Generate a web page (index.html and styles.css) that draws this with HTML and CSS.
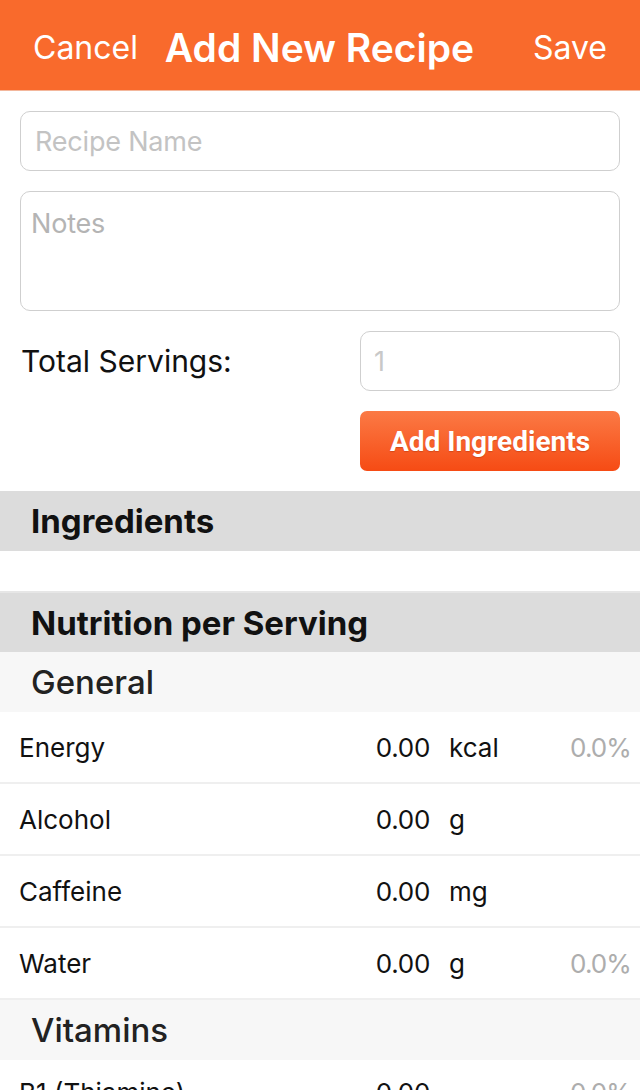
FILE: index.html
```html
<!DOCTYPE html>
<html>
<head>
<meta charset="utf-8">
<link rel="stylesheet" href="styles.css">
</head>
<body>
<header class="nav">
  <span class="nav-btn">Cancel</span>
  <span class="nav-title">Add New Recipe</span>
  <span class="nav-btn">Save</span>
</header>
<section class="form">
  <div class="field field-name"><span class="ph">Recipe Name</span></div>
  <div class="field field-notes"><span class="ph ph-notes">Notes</span></div>
  <div class="servings">
    <span class="servings-label">Total Servings:</span>
    <div class="field field-serv"><span class="ph ph-serv">1</span></div>
  </div>
  <div class="btn-row">
    <div class="btn">Add Ingredients</div>
  </div>
</section>
<div class="sec-head">Ingredients</div>
<div class="spacer"></div>
<div class="sec-head sec-head-top">Nutrition per Serving</div>
<div class="group-head">General</div>
<div class="row"><span class="r-name">Energy</span><span class="r-val">0.00</span><span class="r-unit">kcal</span><span class="r-pct">0.0%</span></div>
<div class="row"><span class="r-name">Alcohol</span><span class="r-val">0.00</span><span class="r-unit">g</span><span class="r-pct"></span></div>
<div class="row"><span class="r-name">Caffeine</span><span class="r-val">0.00</span><span class="r-unit">mg</span><span class="r-pct"></span></div>
<div class="row"><span class="r-name">Water</span><span class="r-val">0.00</span><span class="r-unit">g</span><span class="r-pct">0.0%</span></div>
<div class="group-head">Vitamins</div>
<div class="row row-last"><span class="r-name">B1 (Thiamine)</span><span class="r-val">0.00</span><span class="r-unit"></span><span class="r-pct">0.0%</span></div>
</body>
</html>
```

FILE: styles.css
```css
* { box-sizing: border-box; }
html, body { margin: 0; padding: 0; background: #fff; }
body {
  width: 640px;
  height: 1090px;
  overflow: hidden;
  font-family: Inter, "Liberation Sans", sans-serif;
  color: #111;
}
.nav {
  height: 91px;
  background: #f96a2c;
  border-bottom: 1px solid #f3b79c;
  display: flex;
  align-items: center;
  justify-content: space-between;
  padding: 4px 33px 0 33px;
  color: #fff;
}
.nav-btn { font-size: 32px; font-weight: 400; }
.nav-title { font-size: 39px; font-weight: 600; margin-right: 32px; }
.form {
  padding: 20px 20px 20px 20px;
  display: flex;
  flex-direction: column;
  gap: 20px;
}
.field {
  border: 1px solid #cfcfcf;
  border-radius: 10px;
  height: 60px;
  display: flex;
  align-items: center;
  padding: 0 14px;
}
.field-notes {
  height: 120px;
  align-items: flex-start;
  padding: 15px 10px;
}
.ph { color: #c3c3c3; font-size: 27px; letter-spacing: -0.2px; }
.ph-notes { color: #b4b4b4; }
.ph-serv { color: #c8c8c8; font-size: 27px; }
.servings {
  display: flex;
  align-items: center;
  justify-content: space-between;
}
.servings-label { font-size: 30px; color: #111; padding-left: 1px; }
.field-serv { width: 260px; padding: 0 13px; }
.btn-row { display: flex; justify-content: flex-end; }
.btn {
  width: 260px;
  height: 60px;
  border-radius: 7px;
  background: linear-gradient(#fb7a45, #f64b14);
  color: #fff;
  font-family: Roboto, "Liberation Sans", sans-serif;
  font-weight: 700;
  font-size: 28px;
  display: flex;
  align-items: center;
  justify-content: center;
  text-shadow: 0 1px 1px rgba(150, 40, 0, 0.35);
}
.sec-head {
  height: 60px;
  background: #dcdcdc;
  display: flex;
  align-items: center;
  padding-left: 31px;
  font-size: 33px;
  font-weight: 700;
  color: #111;
}
.sec-head-top { height: 61px; border-top: 2px solid #e6e6e6; }
.spacer { height: 40px; }
.group-head {
  height: 60px;
  background: #f7f7f7;
  display: flex;
  align-items: center;
  padding-left: 31px;
  font-size: 33px;
  font-weight: 500;
  color: #222;
}
.row {
  height: 72px;
  border-bottom: 2px solid #efefef;
  display: flex;
  align-items: center;
  font-size: 26px;
  color: #111;
}
.row-last { border-bottom: none; padding-bottom: 8px; }
.r-name { padding-left: 19px; width: 330px; }
.r-val { width: 100px; text-align: right; letter-spacing: -0.3px; }
.r-unit { padding-left: 19px; width: 120px; }
.r-pct { flex: 1; text-align: right; padding-right: 9px; color: #adadad; letter-spacing: -0.9px; }
```
